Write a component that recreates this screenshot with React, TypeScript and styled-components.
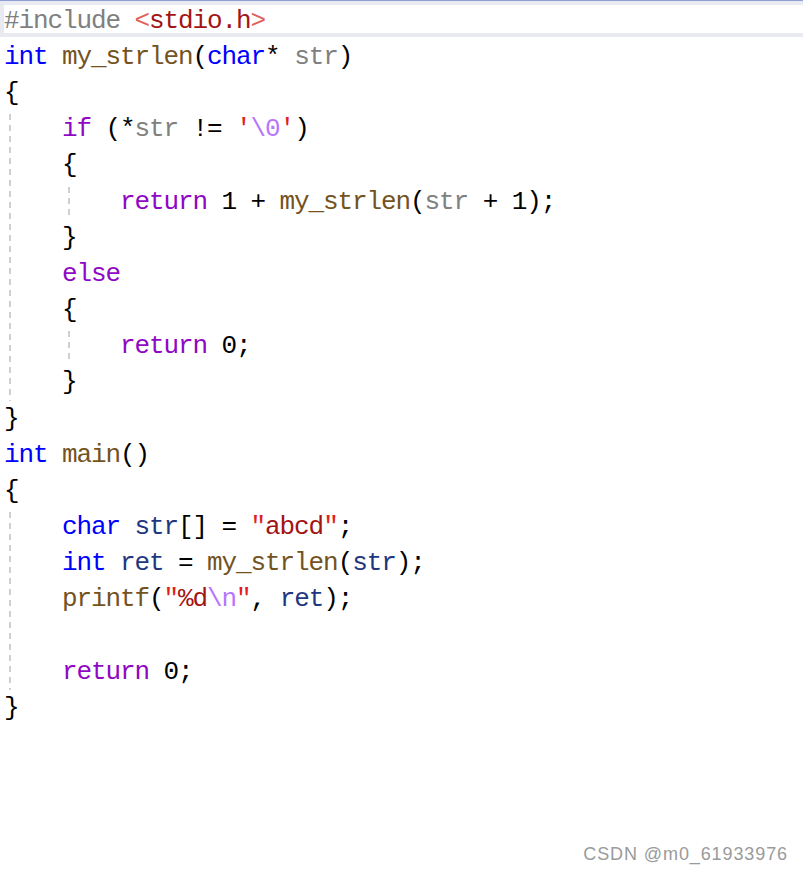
import React from "react";
import styled, { createGlobalStyle } from "styled-components";

const GlobalStyle = createGlobalStyle`
  html, body { margin: 0; padding: 0; background: #ffffff; }
  #root { min-height: 100vh; }
`;

const Page = styled.div`
  display: flex;
  flex-direction: column;
  min-height: 873px;
  width: 803px;
  background: #ffffff;
  border-top: 1px solid #8e9fd3;
  box-sizing: border-box;
`;

const Code = styled.div`
  display: flex;
  flex-direction: column;
  font-family: "Liberation Mono", "DejaVu Sans Mono", monospace;
  font-size: 26px;
  letter-spacing: -1.1px;
  color: #000000;
`;

const CodeBody = styled.div`
  display: flex;
  flex-direction: column;
  padding-top: 2px;
`;

const Line = styled.div`
  height: 36.16px;
  line-height: 36.16px;
  padding-left: 4px;
  white-space: pre;
`;

const CurrentLine = styled.div`
  height: 26px;
  line-height: 28px;
  padding-top: 2px;
  border: 4px solid #e9e9f1;
  border-right: none;
  white-space: pre;
`;

const Block = styled.div<{ $x: number }>`
  display: flex;
  flex-direction: column;
  background-image: repeating-linear-gradient(
    to bottom,
    #cfcfcf 0,
    #cfcfcf 6px,
    transparent 6px,
    transparent 11px
  );
  background-size: 2px 100%;
  background-repeat: no-repeat;
  background-position: ${(p) => p.$x}px 3px;
`;

const colors: Record<string, string> = {
  kw: "#0000ff",
  fn: "#74531f",
  param: "#808080",
  ctrl: "#8f08c4",
  local: "#1f377f",
  str: "#a31515",
  esc: "#b776fb",
  quote: "#e21f1f",
  angle: "#e0605a",
  pp: "#808080",
};

const T = styled.span<{ $c: string }>`
  color: ${(p) => colors[p.$c] || "#000000"};
`;

const Footer = styled.div`
  margin-top: auto;
  display: flex;
  justify-content: flex-end;
  padding: 0 15px 8px 0;
`;

const Watermark = styled.span`
  font-family: "Liberation Sans", Arial, sans-serif;
  font-size: 18px;
  letter-spacing: 0.9px;
  color: #9a9a9a;
  text-shadow: 0 0 1px #ffffff;
`;

const I4 = "    ";
const I8 = "        ";

export default function App() {
  return (
    <>
      <GlobalStyle />
      <Page>
        <Code>
          <CurrentLine>
            <T $c="pp">#include</T> <T $c="angle">&lt;</T>
            <T $c="str">stdio.h</T>
            <T $c="angle">&gt;</T>
          </CurrentLine>
          <CodeBody>
            <Line>
              <T $c="kw">int</T> <T $c="fn">my_strlen</T>(<T $c="kw">char</T>*{" "}
              <T $c="param">str</T>)
            </Line>
            <Line>{"{"}</Line>
            <Block $x={9}>
              <Line>
                {I4}
                <T $c="ctrl">if</T> (*<T $c="param">str</T> != <T $c="quote">'</T>
                <T $c="esc">\0</T>
                <T $c="quote">'</T>)
              </Line>
              <Line>{I4 + "{"}</Line>
              <Block $x={68}>
                <Line>
                  {I8}
                  <T $c="ctrl">return</T> 1 + <T $c="fn">my_strlen</T>(
                  <T $c="param">str</T> + 1);
                </Line>
              </Block>
              <Line>{I4 + "}"}</Line>
              <Line>
                {I4}
                <T $c="ctrl">else</T>
              </Line>
              <Line>{I4 + "{"}</Line>
              <Block $x={68}>
                <Line>
                  {I8}
                  <T $c="ctrl">return</T> 0;
                </Line>
              </Block>
              <Line>{I4 + "}"}</Line>
            </Block>
            <Line>{"}"}</Line>
            <Line>
              <T $c="kw">int</T> <T $c="fn">main</T>()
            </Line>
            <Line>{"{"}</Line>
            <Block $x={9}>
              <Line>
                {I4}
                <T $c="kw">char</T> <T $c="local">str</T>[] ={" "}
                <T $c="quote">"</T>
                <T $c="str">abcd</T>
                <T $c="quote">"</T>;
              </Line>
              <Line>
                {I4}
                <T $c="kw">int</T> <T $c="local">ret</T> ={" "}
                <T $c="fn">my_strlen</T>(<T $c="local">str</T>);
              </Line>
              <Line>
                {I4}
                <T $c="fn">printf</T>(<T $c="quote">"</T>
                <T $c="str">%d</T>
                <T $c="esc">\n</T>
                <T $c="quote">"</T>, <T $c="local">ret</T>);
              </Line>
              <Line> </Line>
              <Line>
                {I4}
                <T $c="ctrl">return</T> 0;
              </Line>
            </Block>
            <Line>{"}"}</Line>
          </CodeBody>
        </Code>
        <Footer>
          <Watermark>CSDN @m0_61933976</Watermark>
        </Footer>
      </Page>
    </>
  );
}
